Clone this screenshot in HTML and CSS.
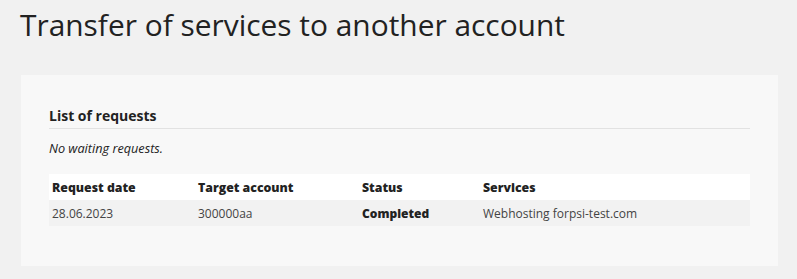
FILE: index.html
```html
<!DOCTYPE html>
<html lang="en">
<head>
 <meta charset="UTF-8">
 <title>Transfer of services to another account</title>
 <link rel="stylesheet" href="styles.css">
</head>
<body>
 <h1 class="page-title">Transfer of services to another account</h1>

 <div class="panel">
  <h2 class="section-title">List of requests</h2>
  <p class="empty-note">No waiting requests.</p>

  <table class="requests">
   <thead>
    <tr>
     <th class="col-date">Request date</th>
     <th class="col-account">Target account</th>
     <th class="col-status">Status</th>
     <th>Services</th>
    </tr>
   </thead>
   <tbody>
    <tr>
     <td>28.06.2023</td>
     <td>300000aa</td>
     <td class="status">Completed</td>
     <td>Webhosting forpsi-test.com</td>
    </tr>
   </tbody>
  </table>
 </div>
</body>
</html>
```

FILE: styles.css
```css
:root {
 --page-bg: #f1f1f1;
 --panel-bg: #f8f8f8;
 --text-color: #222222;
 --muted-color: #444444;
 --line-color: #e2e2e2;
}

html,
body {
 margin: 0;
 padding: 0;
}

body {
 font-family: "Open Sans", "Noto Sans", sans-serif;
 background-color: var(--page-bg);
 color: var(--text-color);
 padding: 5px 19px 0 20px;
}

.page-title {
 font-size: 29.9px;
 font-weight: 400;
 line-height: 40px;
 margin: 0 0 30px 0;
 letter-spacing: 0;
}

/* Light card holding the list */
.panel {
 background-color: var(--panel-bg);
 margin-left: 1px;
 padding: 30px 28px 40px 28px;
}

.section-title {
 font-size: 14px;
 font-weight: 700;
 line-height: 20px;
 margin: 0;
 padding: 1px 0 2px 0;
 border-bottom: 1px solid var(--line-color);
}

.empty-note {
 font-size: 12.7px;
 font-style: italic;
 line-height: 17px;
 margin: 11px 0 17px 0;
 color: var(--text-color);
}

.requests {
 width: 100%;
 border-collapse: collapse;
 font-size: 12px;
}

.requests th,
.requests td {
 text-align: left;
 padding: 0 3px;
 height: 26px;
}

.requests th {
 background-color: #ffffff;
 font-size: 12.3px;
 font-weight: 800;
 color: var(--text-color);
}

.requests td {
 background-color: #f2f2f2;
 color: var(--muted-color);
}

.requests td.status {
 font-weight: 800;
 color: var(--text-color);
}

.col-date {
 width: 140px;
}

.col-account {
 width: 158px;
}

.col-status {
 width: 115px;
}
```
